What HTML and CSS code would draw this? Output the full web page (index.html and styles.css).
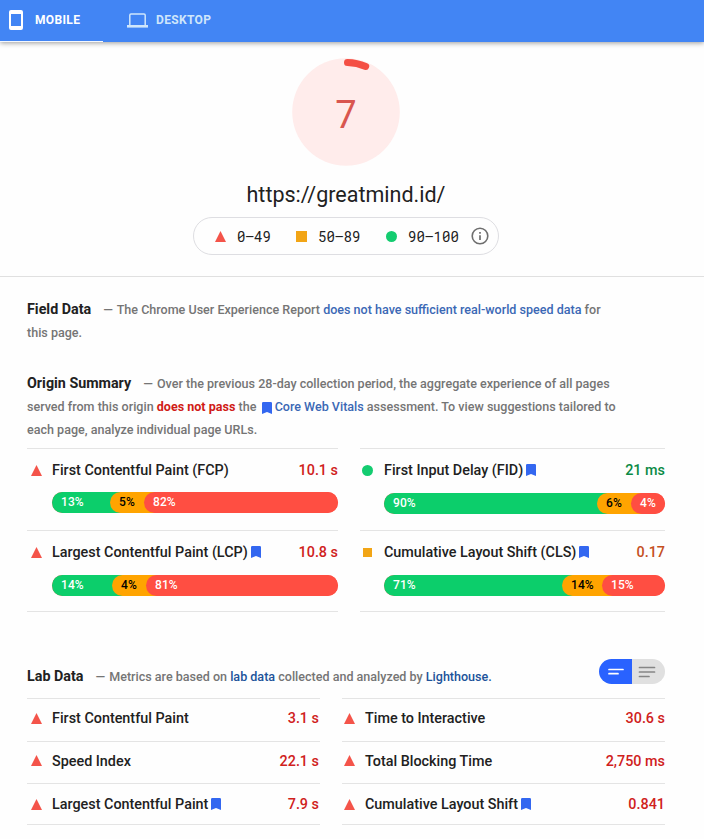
FILE: index.html
```html
<!DOCTYPE html>
<html lang="en">
<head>
<meta charset="utf-8">
<title>PageSpeed Insights</title>
<link rel="stylesheet" href="styles.css">
</head>
<body>
<svg class="defs" width="0" height="0" aria-hidden="true">
  <symbol id="mark" viewBox="0 0 10 12"><path d="M0 1.2Q0 0 1.2 0H8.8Q10 0 10 1.2V12L5 9.9L0 12Z" fill="#3367f0"/></symbol>
  <symbol id="tri" viewBox="0 0 11 11"><path d="M5.5 0L11 11H0Z" fill="#f4544a"/></symbol>
</svg>
<header class="tabs">
  <div class="tab active">
    <svg class="phone" width="14" height="20" viewBox="0 0 14 20"><path fill="#fff" fill-rule="evenodd" d="M2 0H12Q14 0 14 2V18Q14 20 12 20H2Q0 20 0 18V2Q0 0 2 0ZM2 4V16H12V4Z"/></svg>
    <span>MOBILE</span>
  </div>
  <div class="tab desktop">
    <svg width="21" height="15" viewBox="0 0 21 15"><path fill="none" stroke="currentColor" stroke-width="1.5" d="M2.8 12V2.2Q2.8.9 4 .9H17Q18.2.9 18.2 2.2V12"/><path fill="currentColor" d="M0 12H21V14.6H0Z"/></svg>
    <span>DESKTOP</span>
  </div>
</header>
<section class="score">
  <svg class="gauge" width="110" height="110" viewBox="0 0 110 110">
    <circle cx="55" cy="55" r="53.8" fill="#ffeceb"/>
    <path d="M56.5 5.5A50 50 0 0 1 74.7 9.4" fill="none" stroke="#f44f44" stroke-width="7" stroke-linecap="round"/>
    <text x="55" y="70.5" text-anchor="middle" class="num">7</text>
  </svg>
  <div class="url">https://greatmind.id/</div>
  <div class="legend">
    <svg width="11" height="11"><use href="#tri"/></svg><span class="range low">0–49</span>
    <i class="square"></i><span class="range mid">50–89</span>
    <i class="dot"></i><span class="range high">90–100</span>
    <svg width="18" height="18" viewBox="0 0 18 18"><circle cx="9" cy="9" r="7.8" fill="none" stroke="#6e6e6e" stroke-width="1.6"/><path d="M9 8.2V13M9 5V6.7" stroke="#6e6e6e" stroke-width="1.7"/></svg>
  </div>
</section>
<main>
  <p class="desc field"><b class="title">Field Data</b><span class="dash">—</span> The Chrome User Experience Report <a>does not have sufficient real-world speed data</a> for<br>this page.</p>
  <p class="desc origin"><b class="title">Origin Summary</b><span class="dash">—</span> Over the previous 28-day collection period, the aggregate experience of all pages<br>served from this origin <b class="fail">does not pass</b> the <svg class="inmark" width="10" height="12"><use href="#mark"/></svg> <a>Core Web Vitals</a> assessment. To view suggestions tailored to<br>each page, analyze individual page URLs.</p>
  <div class="field-grid">
    <div class="metric">
      <div class="row"><svg class="ic" width="11" height="11"><use href="#tri"/></svg><span>First Contentful Paint (FCP)</span><span class="val">10.1 s</span></div>
      <div class="bar"><div class="seg good" style="width:58px">13%</div><div class="seg avg" style="width:34px">5%</div><div class="seg bad">82%</div></div>
    </div>
    <div class="metric">
      <div class="row"><i class="ic dot"></i><span>First Input Delay (FID)</span><svg class="bm" width="10" height="12"><use href="#mark"/></svg><span class="val green">21 ms</span></div>
      <div class="bar"><div class="seg good" style="width:213px">90%</div><div class="seg avg" style="width:34px">6%</div><div class="seg bad">4%</div></div>
    </div>
    <div class="metric">
      <div class="row"><svg class="ic" width="11" height="11"><use href="#tri"/></svg><span>Largest Contentful Paint (LCP)</span><svg class="bm" width="10" height="12"><use href="#mark"/></svg><span class="val">10.8 s</span></div>
      <div class="bar"><div class="seg good" style="width:60px">14%</div><div class="seg avg" style="width:34px">4%</div><div class="seg bad">81%</div></div>
    </div>
    <div class="metric">
      <div class="row"><i class="ic square"></i><span>Cumulative Layout Shift (CLS)</span><svg class="bm" width="10" height="12"><use href="#mark"/></svg><span class="val orange">0.17</span></div>
      <div class="bar"><div class="seg good" style="width:178px">71%</div><div class="seg avg" style="width:40px">14%</div><div class="seg bad">15%</div></div>
    </div>
  </div>
  <div class="lab-head">
    <p class="desc lab"><b class="title">Lab Data</b><span class="dash">—</span> Metrics are based on <a>lab data</a> collected and analyzed by <a>Lighthouse.</a></p>
    <div class="toggle">
      <div class="on"><svg width="16" height="8" viewBox="0 0 16 8"><path d="M1 1.5H15M1 5.7H10" stroke="#fff" stroke-width="1.7" stroke-linecap="round"/></svg></div>
      <div class="off"><svg width="18" height="12" viewBox="0 0 18 12"><path d="M1.5 1.5H16.5M1.5 6H16.5M1.5 10.5H11" stroke="#858585" stroke-width="1.7" stroke-linecap="round"/></svg></div>
    </div>
  </div>
  <div class="lab-grid">
    <div class="row"><svg class="ic" width="11" height="11"><use href="#tri"/></svg><span>First Contentful Paint</span><span class="val">3.1 s</span></div>
    <div class="row"><svg class="ic" width="11" height="11"><use href="#tri"/></svg><span>Time to Interactive</span><span class="val">30.6 s</span></div>
    <div class="row"><svg class="ic" width="11" height="11"><use href="#tri"/></svg><span>Speed Index</span><span class="val">22.1 s</span></div>
    <div class="row"><svg class="ic" width="11" height="11"><use href="#tri"/></svg><span>Total Blocking Time</span><span class="val">2,750 ms</span></div>
    <div class="row last"><svg class="ic" width="11" height="11"><use href="#tri"/></svg><span>Largest Contentful Paint</span><svg class="bm" width="10" height="12"><use href="#mark"/></svg><span class="val">7.9 s</span></div>
    <div class="row last"><svg class="ic" width="11" height="11"><use href="#tri"/></svg><span>Cumulative Layout Shift</span><svg class="bm" width="10" height="12"><use href="#mark"/></svg><span class="val">0.841</span></div>
  </div>
</main>
</body>
</html>
```
FILE: styles.css
```css
* { box-sizing: border-box; }
body { margin: 0; height: 839px; overflow: hidden; background: #fefefe; font-family: Roboto, sans-serif; color: #212121; }
svg { display: block; flex: none; }
.defs { position: absolute; }
i { display: block; flex: none; }

.tabs { height: 42px; background: #4285f4; display: flex; box-shadow: 0 1px 5px rgba(0,0,0,.4); font-size: 12px; font-weight: 700; line-height: 40px; letter-spacing: .35px; }
.tab { display: flex; align-items: center; height: 42px; padding-bottom: 2px; }
.tab.active { width: 103px; padding-left: 9px; gap: 12px; color: #fff; padding-bottom: 1px; border-bottom: 1px solid #f4f8ff; }
.desktop { margin-left: 24px; gap: 8px; color: #cfe6fb; }

.score { height: 235px; border-bottom: 1px solid #e0e0e0; display: flex; flex-direction: column; align-items: center; padding: 15px 12px 0 0; }
.num { font: 38px Roboto, sans-serif; fill: #d9564f; }
.url { font-size: 21.5px; line-height: 28px; margin-top: 14px; }
.legend { width: 306px; height: 38px; border: 1px solid #dedee2; border-radius: 19px; margin-top: 8px; display: flex; align-items: center; padding-left: 21px; font: 14px "Roboto Mono", "Liberation Mono", monospace; letter-spacing: .1px; }
.range { margin-left: 11px; }
.low { width: 59px; }
.mid { width: 68px; }
.high { width: 63px; }
.square { width: 11px; height: 11px; background: #f2a516; }
.dot { width: 11px; height: 11px; border-radius: 50%; background: #14cc70; }

main { padding: 0 39px 0 27px; }
p { margin: 0; }
.desc { font-size: 12.56px; font-weight: 500; line-height: 23px; color: #757575; white-space: nowrap; }
.field { height: 47px; margin-top: 21px; }
.origin { height: 69px; margin-top: 27px; }
.title { font-size: 14.3px; font-weight: 700; color: #212121; margin-right: 12px; }
.dash { margin-right: 1px; }
.desc a { color: #3b68b5; }
.lab a { color: #20539a; }
.fail { font-weight: 700; color: #d01b16; }
.inmark { display: inline-block; vertical-align: -3px; margin-left: 2px; }

.field-grid { display: grid; grid-template-columns: 311px 305px; column-gap: 22px; grid-template-rows: 82px 81px; margin-top: 7px; }
.metric { border-top: 1px solid #e4e4e4; }
.metric:nth-child(n+3) { height: 82px; border-bottom: 1px solid #e4e4e4; }
.row { display: flex; align-items: center; font-size: 14.36px; font-weight: 500; line-height: 20px; white-space: nowrap; }
.row span { padding-top: 2px; }
.metric .row { height: 43px; padding-bottom: 1px; }
.metric:nth-child(n+2) .row { height: 44px; padding-bottom: 2px; }
.ic { margin-left: 4px; margin-right: 10px; }
.metric:nth-child(even) .ic { margin-left: 3px; }
.metric i.ic.dot { margin-left: 2px; margin-right: 11px; }
i.ic.square { width: 9px; height: 9px; margin-right: 12px; }
.bm { margin-left: 3px; }
.val { margin-left: auto; color: #d0211c; }
.green { color: #0b8a45; }
.orange { color: #c5501f; }
.bar { height: 21px; margin-left: 25px; display: flex; border-radius: 11px; overflow: hidden; background: #ff4e42; font-size: 12px; font-weight: 500; line-height: 20px; letter-spacing: .1px; }
.metric:nth-child(even) .bar { margin-left: 24px; }
.seg { height: 21px; padding-left: 9px; color: #fff; flex: none; }
.seg.good { background: #0cce6b; box-shadow: 11px 0 #0cce6b; }
.seg.avg { background: #ffa400; color: #000; border-radius: 11px 0 0 11px; box-shadow: 11px 0 #ffa400; position: relative; clip-path: inset(0 -11px 0 0); }
.seg.bad { flex: 1; background: #ff4e42; border-radius: 11px 0 0 11px; position: relative; }

.lab-head { display: flex; justify-content: space-between; height: 39px; margin-top: 48px; }
.lab { padding-top: 6px; }
.toggle { width: 66px; height: 25px; border-radius: 13px; overflow: hidden; display: flex; }
.toggle div { width: 33px; display: flex; align-items: center; justify-content: center; }
.on { background: #2962ff; }
.off { background: #e0e0e0; padding-right: 3px; }
.lab-grid { display: grid; grid-template-columns: 293px 323px; column-gap: 22px; grid-template-rows: 43px 42px 42px; }
.lab-grid .row { border-top: 1px solid #e4e4e4; padding-bottom: 4px; }
.lab-grid .row:nth-child(odd) .val { margin-right: 1px; }
.lab-grid .row:nth-child(even) .ic { margin-left: 2px; }
.lab-grid .last { border-bottom: 1px solid #e4e4e4; padding-bottom: 0; }
```
